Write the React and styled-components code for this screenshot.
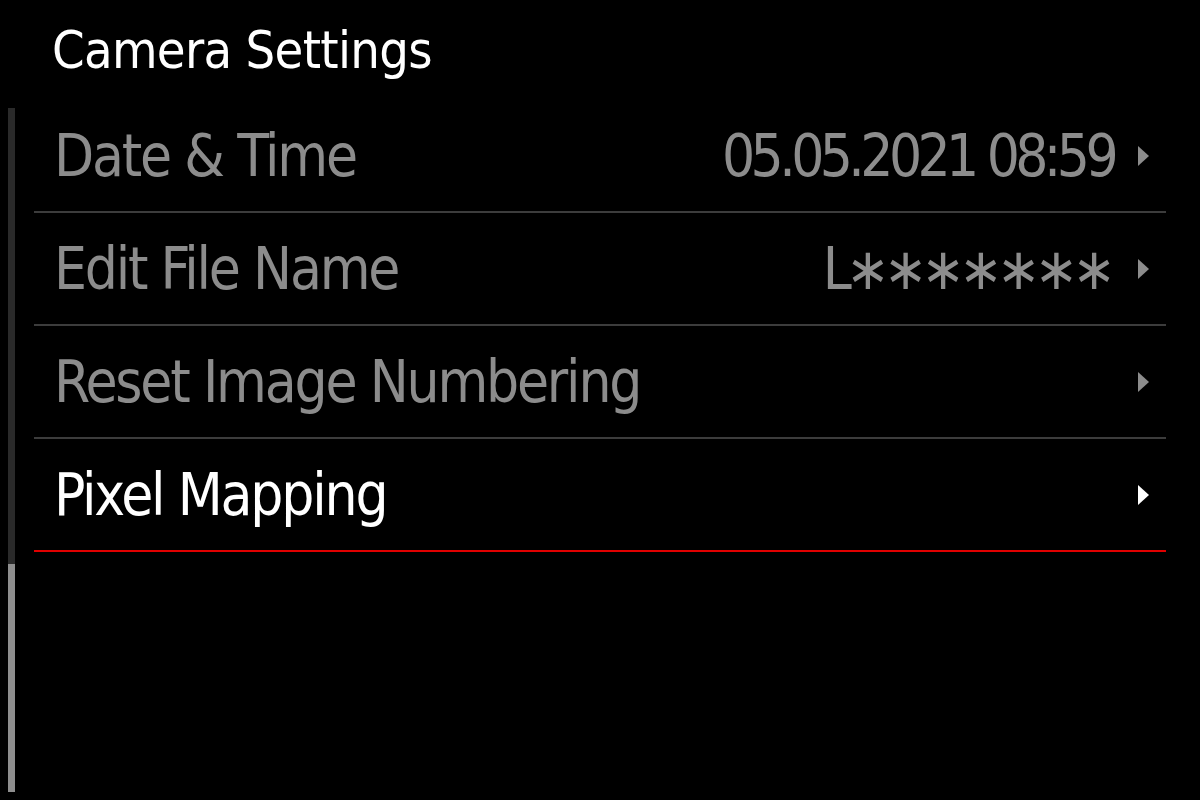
import React from "react";
import styled, { createGlobalStyle } from "styled-components";

const GlobalStyle = createGlobalStyle`
    html, body {
        margin: 0;
        padding: 0;
        background: #000;
    }
    body {
        width: 1200px;
        height: 800px;
        overflow: hidden;
        font-family: "DejaVu Sans Condensed", "DejaVu Sans", sans-serif;
    }
`;

const Screen = styled.div`
    width: 1200px;
    height: 800px;
    background: #000;
    display: flex;
    flex-direction: column;
`;

const Title = styled.h1`
    margin: 0;
    height: 100px;
    padding-left: 52px;
    display: flex;
    align-items: center;
    box-sizing: border-box;
    font-size: 52px;
    font-weight: normal;
    letter-spacing: -0.7px;
    color: #fff;
`;

const Body = styled.div`
    display: flex;
    align-items: flex-start;
`;

const ScrollTrack = styled.div`
    margin: 8px 0 0 8px;
    width: 7px;
    height: 684px;
    background: #2a2a2a;
    display: flex;
    flex-direction: column;
    justify-content: flex-end;
`;

const ScrollThumb = styled.div`
    height: 228px;
    background: #8e8e8e;
`;

const List = styled.ul`
    list-style: none;
    margin: 0 0 0 19px;
    padding: 0;
    width: 1132px;
`;

const Row = styled.li`
    height: 113px;
    box-sizing: border-box;
    padding: 0 17px 0 20px;
    display: flex;
    align-items: center;
    border-bottom: 2px solid ${props => (props.selected ? "#e00000" : "#3c3c3c")};
    color: ${props => (props.selected ? "#ffffff" : "#8c8c8c")};
    font-size: 58px;
`;

const Label = styled.span`
    flex: 1;
    white-space: nowrap;
    letter-spacing: -2.2px;
`;

const Value = styled.span`
    white-space: nowrap;
    margin-right: ${props => props.gap}px;
    letter-spacing: ${props => props.spacing}px;
`;

const Chevron = styled.span`
    width: 0;
    height: 0;
    border-top: 10px solid transparent;
    border-bottom: 10px solid transparent;
    border-left: 11px solid currentColor;
`;

const items = [
    { label: "Date & Time", value: "05.05.2021 08:59", spacing: -4.6, gap: 24 },
    { label: "Edit File Name", value: "L∗∗∗∗∗∗∗", spacing: -6, gap: 28 },
    { label: "Reset Image Numbering" },
    { label: "Pixel Mapping", selected: true },
];

export default function App() {
    return (
        <>
            <GlobalStyle />
            <Screen>
                <Title>Camera Settings</Title>
                <Body>
                    <ScrollTrack>
                        <ScrollThumb />
                    </ScrollTrack>
                    <List>
                        {items.map(item => (
                            <Row key={item.label} selected={item.selected}>
                                <Label>{item.label}</Label>
                                {item.value && (
                                    <Value spacing={item.spacing} gap={item.gap}>
                                        {item.value}
                                    </Value>
                                )}
                                <Chevron />
                            </Row>
                        ))}
                    </List>
                </Body>
            </Screen>
        </>
    );
}
